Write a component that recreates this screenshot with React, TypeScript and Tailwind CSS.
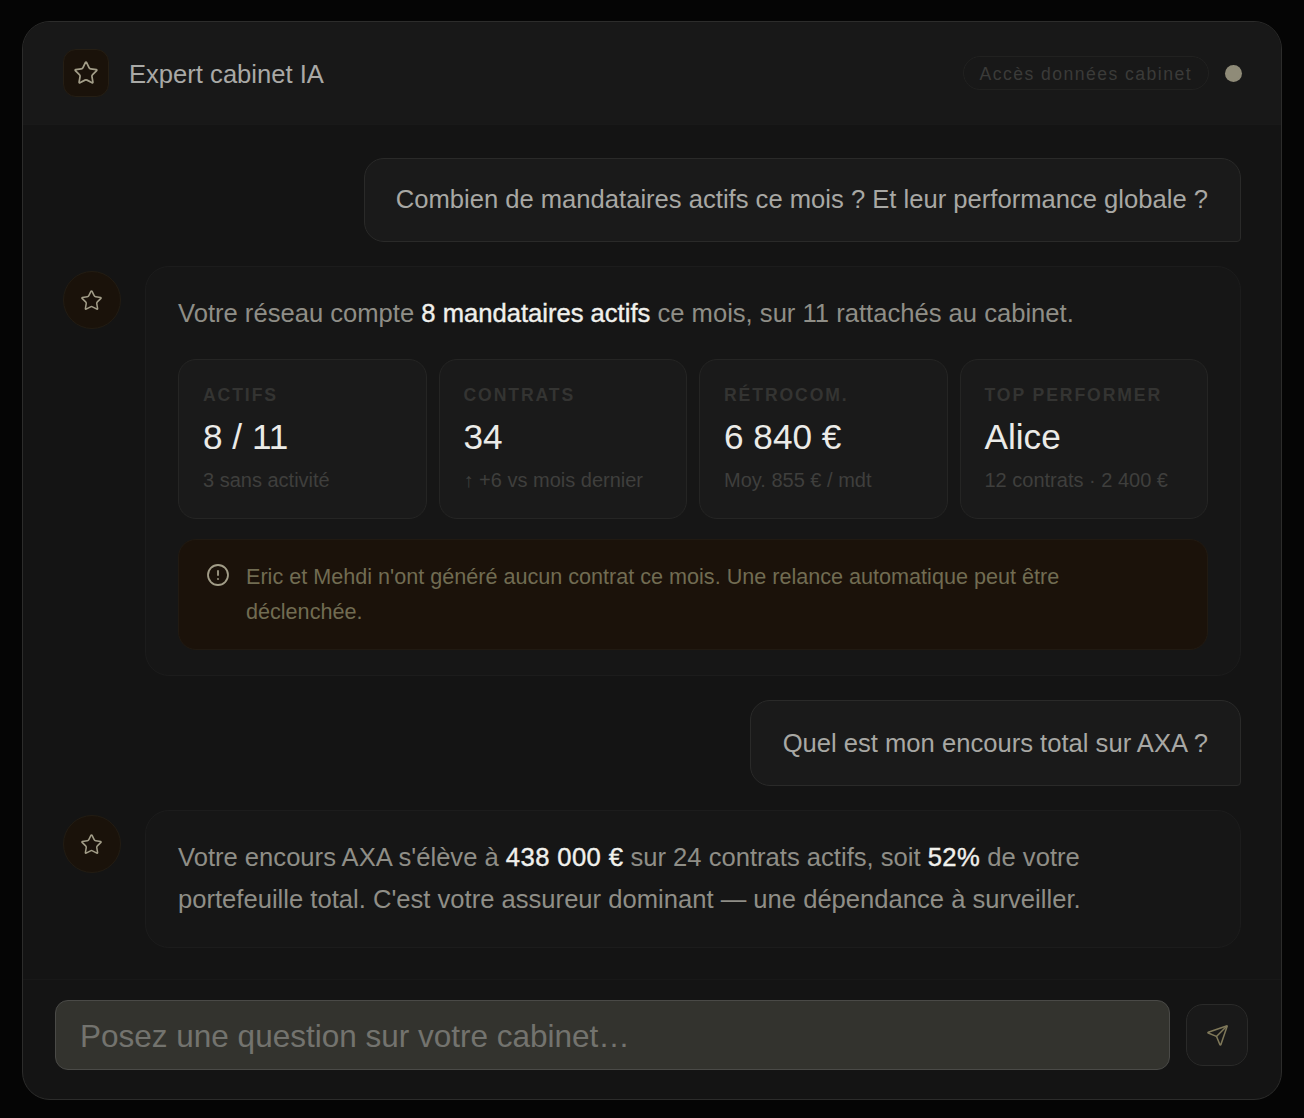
import React from 'react';
import { Star, CircleAlert, Send } from 'lucide-react';

const stats = [
  { label: 'ACTIFS', value: '8 / 11', sub: '3 sans activité' },
  { label: 'CONTRATS', value: '34', sub: '↑ +6 vs mois dernier' },
  { label: 'RÉTROCOM.', value: '6 840 €', sub: 'Moy. 855 € / mdt' },
  { label: 'TOP PERFORMER', value: 'Alice', sub: '12 contrats · 2 400 €' },
];

const Avatar = () => (
  <div className="flex h-[58px] w-[58px] shrink-0 items-center justify-center rounded-full border border-[#221c13] bg-[#1a120a] mt-[5px]">
    <Star size={23} strokeWidth={1.6} className="-ml-[2px] text-[#a29d88]" />
  </div>
);

const Hl = ({ children }: { children: React.ReactNode }) => (
  <span className="text-[#f0f0ec] [-webkit-text-stroke:0.4px_#f0f0ec]">{children}</span>
);

const App = () => {
  return (
    <div className="h-[1118px] bg-[#050505] px-[22px] pt-[21px] pb-[18px] font-['Liberation_Sans',Arial,sans-serif]">
      <div className="flex h-full flex-col overflow-hidden rounded-[28px] border border-[#2c2c2b] bg-[#141414]">
        {/* Header */}
        <div className="flex h-[103px] shrink-0 items-center border-b border-[#191919] bg-[#181818] pl-[40px] pr-[39px]">
          <div className="flex h-[48px] w-[46px] items-center justify-center rounded-[13px] border border-[#251e14] bg-[#1a120a]">
            <Star size={26} strokeWidth={1.6} className="text-[#a29d88]" />
          </div>
          <span className="ml-[20px] pt-[2px] text-[25.6px] text-[#a9a9a6]">Expert cabinet IA</span>
          <div className="ml-auto flex h-[34px] items-center rounded-full border border-[#212120] px-[16px] pt-[2px] text-[17.6px] tracking-[1.45px] text-[#3b3b39]">
            Accès données cabinet
          </div>
          <div className="ml-[16px] h-[17px] w-[17px] rounded-full bg-[#8f8b78]" />
        </div>

        {/* Messages */}
        <div className="flex flex-1 flex-col gap-[24px] px-[40px] pt-[33px]">
          <div className="ml-auto rounded-[20px] rounded-br-[4px] border border-[#2a2a29] bg-[#1a1a1a] pl-[31px] pr-[32px] pt-[21px] pb-[23px] text-[25.6px] leading-[38px] text-[#a8a8a4]">
            Combien de mandataires actifs ce mois ? Et leur performance globale ?
          </div>

          <div className="flex gap-[24px]">
            <Avatar />
            <div className="flex-1 rounded-[24px] border border-[#1c1c1c] bg-[#161616] px-[32px] pt-[25px] pb-[25px]">
              <p className="text-[25.6px] leading-[42px] text-[#8f8e87]">
                Votre réseau compte <Hl>8 mandataires actifs</Hl> ce mois, sur 11 rattachés au cabinet.
              </p>
              <div className="mt-[25px] grid grid-cols-4 gap-[12px]">
                {stats.map((s) => (
                  <div key={s.label} className="h-[160px] rounded-[18px] border border-[#252524] bg-[#1a1a1a] px-[24px] pt-[24px]">
                    <div className="text-[17.6px] leading-[22px] font-bold tracking-[1.9px] text-[#343432]">{s.label}</div>
                    <div className="mt-[9px] text-[35.2px] leading-[44px] text-[#ebebe8]">{s.value}</div>
                    <div className="mt-[8px] text-[20px] leading-[26px] text-[#3f3f3d]">{s.sub}</div>
                  </div>
                ))}
              </div>
              <div className="mt-[20px] flex h-[111px] gap-[16px] rounded-[18px] border border-[#211a12] bg-[#1b120a] pl-[27px] pr-[40px] pt-[19px]">
                <CircleAlert size={24} strokeWidth={1.8} className="mt-[4px] shrink-0 text-[#a29d88]" />
                <p className="text-[21.6px] leading-[35px] text-[#716c52]">
                  Eric et Mehdi n'ont généré aucun contrat ce mois. Une relance automatique peut être déclenchée.
                </p>
              </div>
            </div>
          </div>

          <div className="ml-auto rounded-[20px] rounded-br-[4px] border border-[#2a2a29] bg-[#1a1a1a] px-[32px] py-[22px] text-[25.6px] leading-[40px] text-[#a8a8a4]">
            Quel est mon encours total sur AXA ?
          </div>

          <div className="flex gap-[24px]">
            <Avatar />
            <div className="flex-1 rounded-[24px] border border-[#1c1c1c] bg-[#161616] px-[32px] pt-[25px] pb-[27px] text-[25.6px] leading-[42px] text-[#8f8e87]">
              <p className="max-w-[960px]">
                Votre encours AXA s'élève à <span className="tracking-[0.4px]"><Hl>438 000 €</Hl></span> sur 24 contrats actifs, soit <span className="tracking-[0.4px]"><Hl>52%</Hl></span> de votre portefeuille total. C'est votre assureur dominant — une dépendance à surveiller.
              </p>
            </div>
          </div>
        </div>

        {/* Input */}
        <div className="flex shrink-0 items-center gap-[16px] border-t border-[#181818] pl-[32px] pr-[33px] pt-[20px] pb-[29px]">
          <div className="flex h-[70px] flex-1 items-center rounded-[13px] border border-[#4a4a47] bg-[#33332e] px-[24px] pt-[3px] text-[31.5px] text-[#73736e]">
            Posez une question sur votre cabinet…
          </div>
          <button className="flex h-[62px] w-[62px] shrink-0 items-center justify-center rounded-[17px] border border-[#2a2a29] bg-[#191919]">
            <Send size={23} strokeWidth={1.6} className="text-[#7f7859]" />
          </button>
        </div>
      </div>
    </div>
  );
};

export default App;
